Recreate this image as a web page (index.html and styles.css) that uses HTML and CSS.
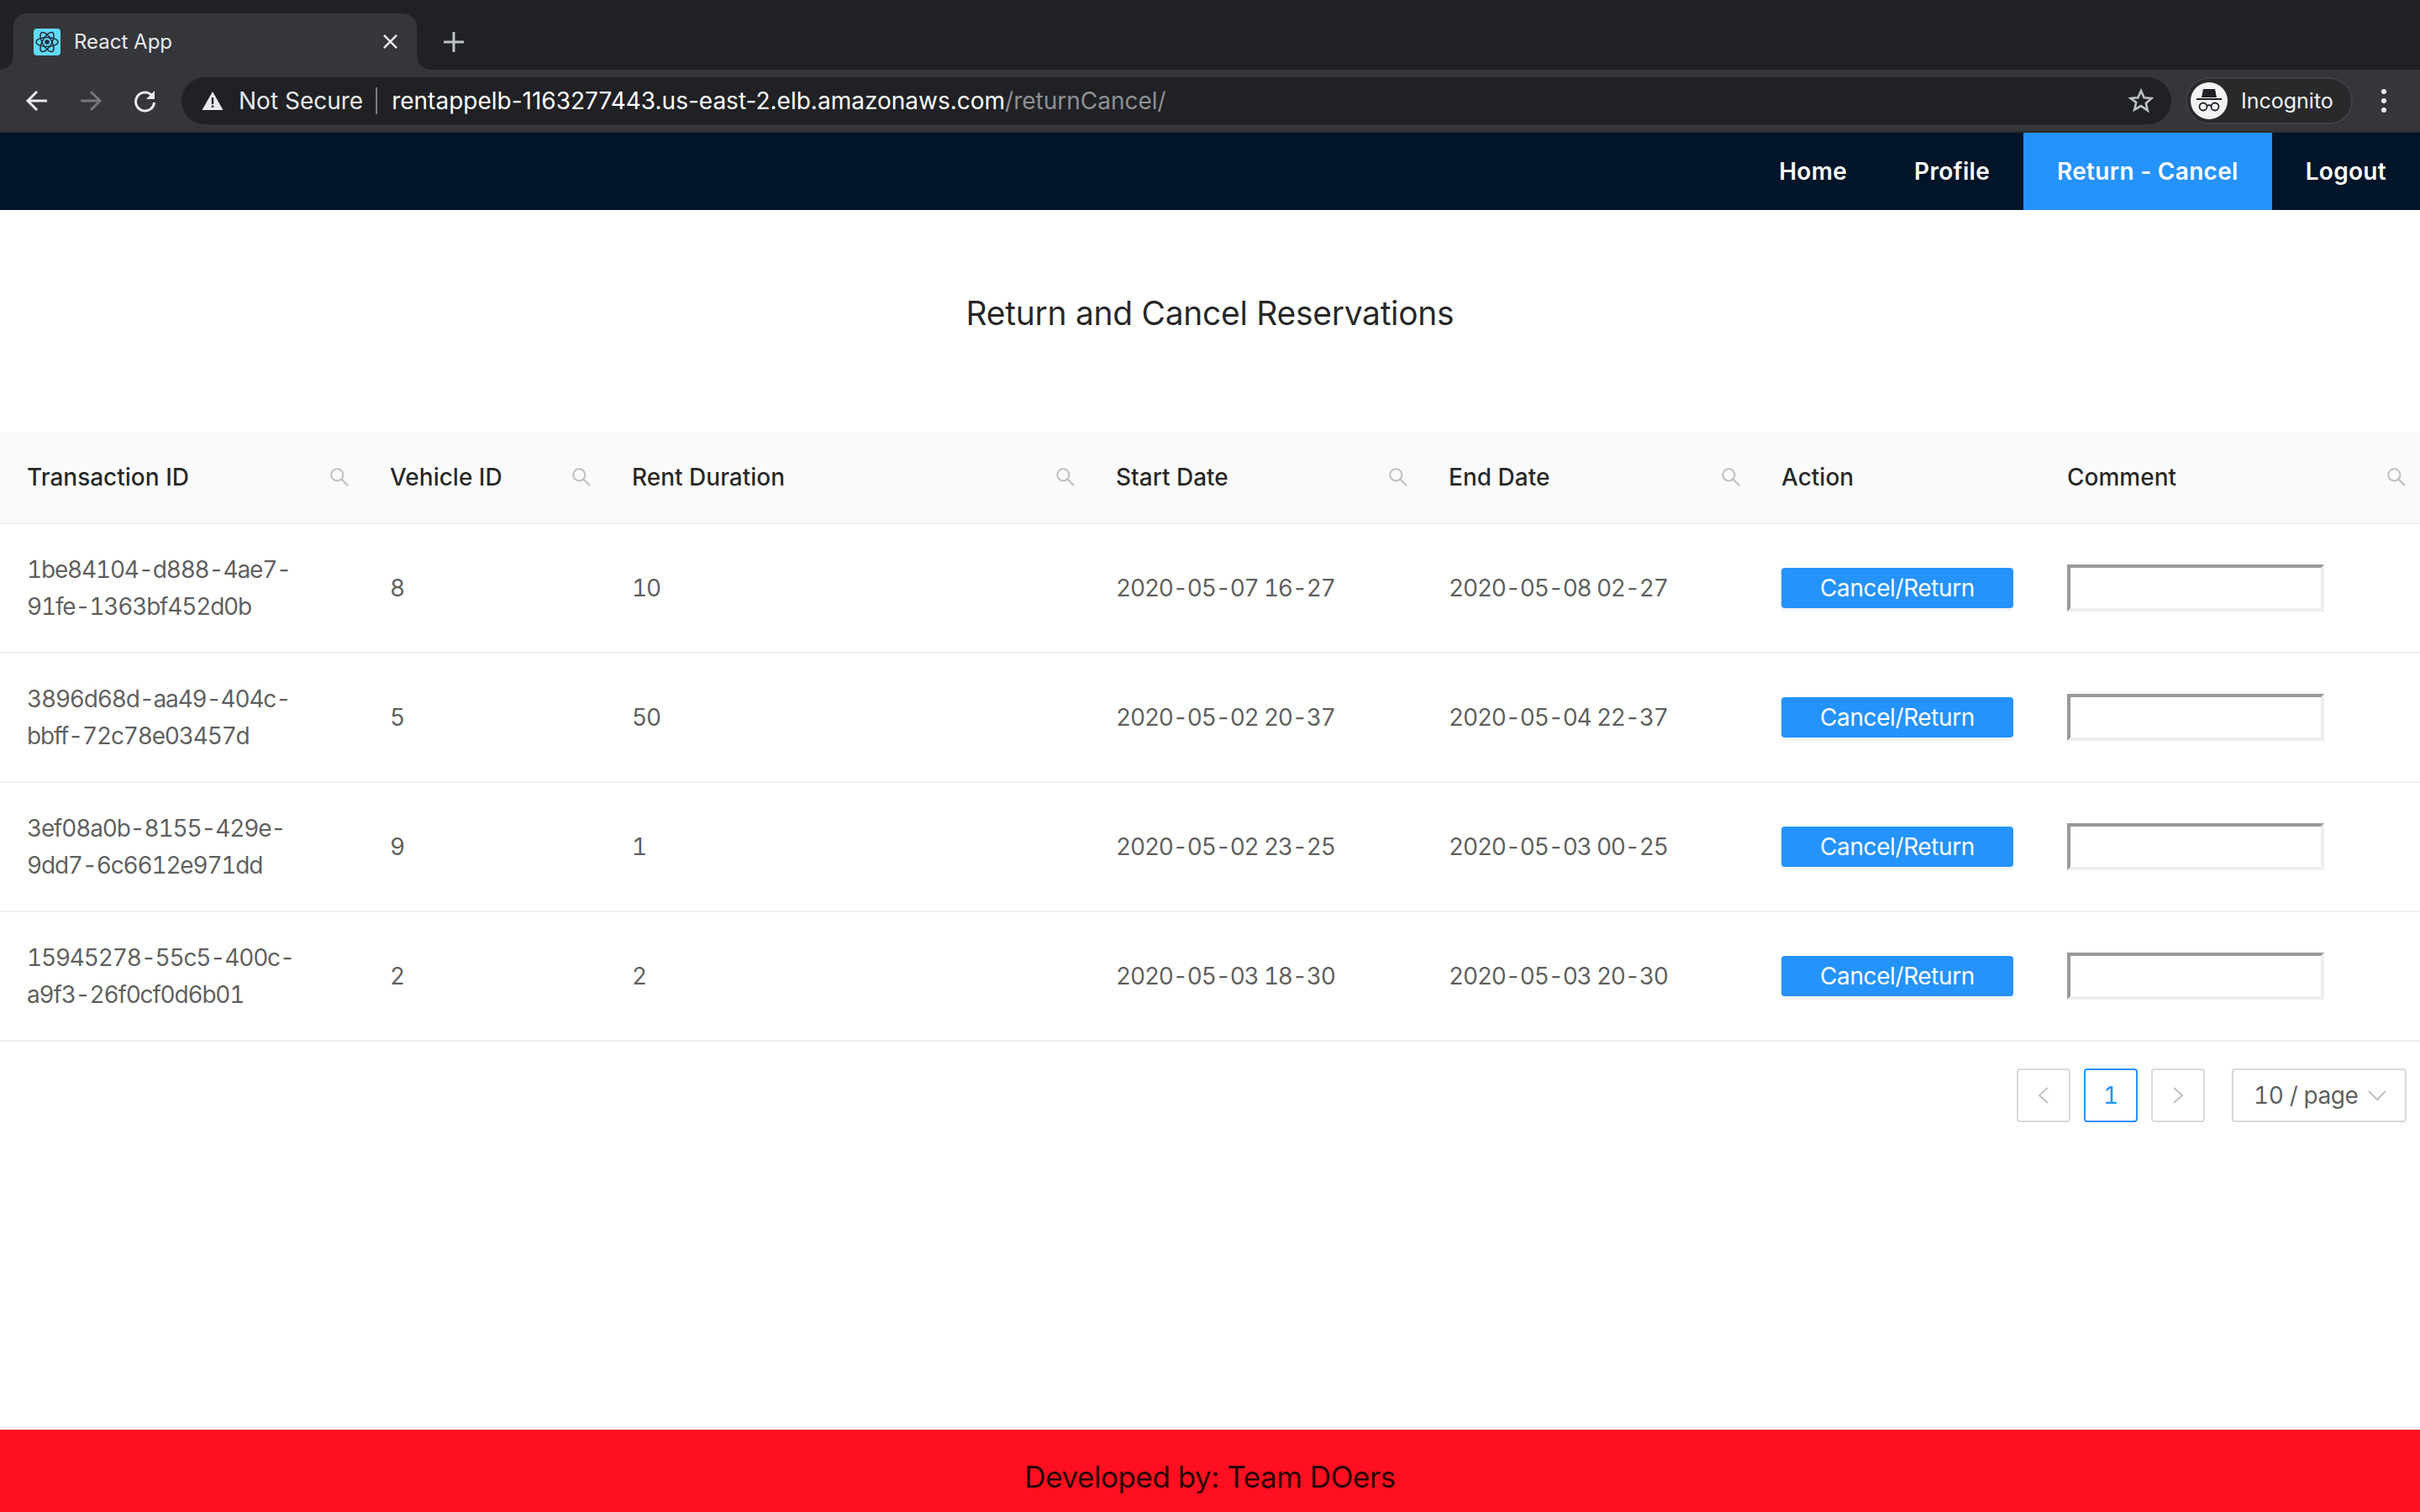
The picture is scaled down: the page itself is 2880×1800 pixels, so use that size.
FILE: index.html
```html
<!DOCTYPE html>
<html lang="en">

<head>
    <meta charset="UTF-8">
    <title>React App</title>
    <link rel="stylesheet" href="styles.css">
</head>

<body>
    <svg class="sprite">
        <symbol id="search" viewBox="64 64 896 896">
            <path d="M909.6 854.5L649.9 594.8C690.2 542.7 712 479 712 412c0-80.2-31.3-155.4-87.9-212.1-56.6-56.7-132-87.9-212.1-87.9s-155.5 31.3-212.1 87.9C143.2 256.5 112 331.8 112 412c0 80.1 31.3 155.5 87.9 212.1C256.5 680.8 331.8 712 412 712c67 0 130.6-21.8 182.7-62l259.7 259.6a8.2 8.2 0 0 0 11.6 0l43.6-43.5a8.2 8.2 0 0 0 0-11.6zM570.4 570.4C528 612.7 471.8 636 412 636s-116-23.3-158.4-65.6C211.3 528 188 471.8 188 412s23.3-116.1 65.6-158.4C296 211.3 352.2 188 412 188s116.1 23.2 158.4 65.6S636 352.2 636 412s-23.3 116.1-65.6 158.4z" />
        </symbol>
    </svg>

    <!-- browser chrome -->
    <div class="tabstrip">
        <div class="tab">
            <svg class="favicon" viewBox="0 0 32 32">
                <rect width="32" height="32" rx="4" fill="#61dafb" />
                <g fill="none" stroke="#20303a" stroke-width="1.5">
                    <ellipse cx="16" cy="16" rx="13" ry="5.500" />
                    <ellipse cx="16" cy="16" rx="13" ry="5.500" transform="rotate(60 16 16)" />
                    <ellipse cx="16" cy="16" rx="13" ry="5.500" transform="rotate(120 16 16)" />
                </g>
                <circle cx="16" cy="16" r="2.800" fill="#20303a" />
            </svg>
            <span class="tab-title">React App</span>
            <svg class="tab-close" viewBox="0 0 18 18">
                <path d="M1 1l16 16M17 1L1 17" stroke="#e8eaed" stroke-width="2.600" />
            </svg>
        </div>
        <svg class="new-tab" viewBox="0 0 24 24">
            <path d="M12 0v24M0 12h24" stroke="#bdc1c6" stroke-width="3" />
        </svg>
    </div>

    <div class="toolbar">
        <svg class="tool-icon" viewBox="0 0 28 28">
            <path d="M26 14H4M14 3L3 14l11 11" fill="none" stroke="#e8eaed" stroke-width="3" />
        </svg>
        <svg class="tool-icon" viewBox="0 0 28 28">
            <path d="M2 14h22M14 3l11 11-11 11" fill="none" stroke="#74767a" stroke-width="3" />
        </svg>
        <svg class="tool-icon" viewBox="0 0 28 28">
            <path d="M23 8a11 11 0 1 0 2.500 8" fill="none" stroke="#e8eaed" stroke-width="3" />
            <path d="M26 2v10H16z" fill="#e8eaed" />
        </svg>

        <div class="omnibox">
            <svg class="warn" viewBox="0 0 26 24">
                <path d="M13 1l12.500 22H.5z" fill="#e8eaed" />
                <path d="M11.800 8h2.400v8h-2.400zM11.800 17.500h2.400V20h-2.400z" fill="#202124" />
            </svg>
            <span class="not-secure">Not Secure</span>
            <span class="url"><span class="url-host">rentappelb-1163277443.us-east-2.elb.amazonaws.com</span>/returnCancel/</span>
            <svg class="star" viewBox="0 0 30 30">
                <path d="M15 3l3.600 8.200 8.900.8-6.700 5.900 2 8.700L15 21.100l-7.800 4.500 2-8.700L2.500 12l8.900-.8z" fill="none" stroke="#bdc1c6" stroke-width="2.600" />
            </svg>
        </div>

        <div class="profile-pill">
            <svg class="incognito" viewBox="0 0 44 44">
                <circle cx="22" cy="22" r="22" fill="#f1f3f4" />
                <path d="M15 8h14l2 10H13zM7 19h30v2H7z" fill="#202124" />
                <g fill="none" stroke="#202124" stroke-width="1.800">
                    <circle cx="15" cy="29" r="4.500" />
                    <circle cx="29" cy="29" r="4.500" />
                    <path d="M19.500 28c1.500-1 3.500-1 5 0" />
                </g>
            </svg>
            <span>Incognito</span>
        </div>

        <div class="kebab"><i></i><i></i><i></i></div>
    </div>

    <!-- app -->
    <div class="app">
        <div class="menu">
            <a class="menu-item">Home</a>
            <a class="menu-item">Profile</a>
            <a class="menu-item selected">Return - Cancel</a>
            <a class="menu-item">Logout</a>
        </div>

        <div class="content">
            <h1 class="page-title">Return and Cancel Reservations</h1>

            <table class="res-table">
                <colgroup>
                    <col class="c-id">
                    <col class="c-vehicle">
                    <col class="c-duration">
                    <col class="c-date">
                    <col class="c-date">
                    <col class="c-action">
                    <col>
                </colgroup>
                <thead>
                    <tr>
                        <th><div class="th-inner">Transaction ID<svg class="th-search"><use href="#search" /></svg></div></th>
                        <th><div class="th-inner">Vehicle ID<svg class="th-search"><use href="#search" /></svg></div></th>
                        <th><div class="th-inner">Rent Duration<svg class="th-search"><use href="#search" /></svg></div></th>
                        <th><div class="th-inner">Start Date<svg class="th-search"><use href="#search" /></svg></div></th>
                        <th><div class="th-inner">End Date<svg class="th-search"><use href="#search" /></svg></div></th>
                        <th><div class="th-inner">Action</div></th>
                        <th><div class="th-inner">Comment<svg class="th-search"><use href="#search" /></svg></div></th>
                    </tr>
                </thead>
                <tbody>
                    <tr>
                        <td>1be84104-d888-4ae7-91fe-1363bf452d0b</td>
                        <td>8</td>
                        <td>10</td>
                        <td>2020-05-07 16-27</td>
                        <td>2020-05-08 02-27</td>
                        <td><button class="action-btn">Cancel/Return</button></td>
                        <td><input class="comment-input" type="text"></td>
                    </tr>
                    <tr>
                        <td>3896d68d-aa49-404c-bbff-72c78e03457d</td>
                        <td>5</td>
                        <td>50</td>
                        <td>2020-05-02 20-37</td>
                        <td>2020-05-04 22-37</td>
                        <td><button class="action-btn">Cancel/Return</button></td>
                        <td><input class="comment-input" type="text"></td>
                    </tr>
                    <tr>
                        <td>3ef08a0b-8155-429e-9dd7-6c6612e971dd</td>
                        <td>9</td>
                        <td>1</td>
                        <td>2020-05-02 23-25</td>
                        <td>2020-05-03 00-25</td>
                        <td><button class="action-btn">Cancel/Return</button></td>
                        <td><input class="comment-input" type="text"></td>
                    </tr>
                    <tr>
                        <td>15945278-55c5-400c-a9f3-26f0cf0d6b01</td>
                        <td>2</td>
                        <td>2</td>
                        <td>2020-05-03 18-30</td>
                        <td>2020-05-03 20-30</td>
                        <td><button class="action-btn">Cancel/Return</button></td>
                        <td><input class="comment-input" type="text"></td>
                    </tr>
                </tbody>
            </table>

            <div class="pagination">
                <div class="page-box">
                    <svg class="page-arrow" viewBox="0 0 14 22"><path d="M12 2L2 11l10 9" /></svg>
                </div>
                <div class="page-box page-current">1</div>
                <div class="page-box">
                    <svg class="page-arrow" viewBox="0 0 14 22"><path d="M2 2l10 9-10 9" /></svg>
                </div>
                <div class="page-size">
                    <span>10 / page</span>
                    <svg class="size-arrow" viewBox="0 0 22 14"><path d="M1 2l10 10L21 2" /></svg>
                </div>
            </div>
        </div>

        <div class="footer">Developed by: Team DOers</div>
    </div>
</body>

</html>
```

FILE: styles.css
```css
* {
    box-sizing: border-box;
}

html,
body {
    margin: 0;
    padding: 0;
    height: 1800px;
    background-color: #fff;
    font-family: Inter, "Noto Sans", sans-serif;
    overflow: hidden;
}

body {
    display: flex;
    flex-direction: column;
}

.sprite {
    display: none;
}

/* browser chrome */
.tabstrip {
    height: 83px;
    flex: none;
    background-color: #202124;
    padding: 16px 0 0 16px;
    display: flex;
    align-items: flex-start;
}

.tab {
    position: relative;
    width: 480px;
    height: 67px;
    background-color: #35363a;
    border-radius: 16px 16px 0 0;
    display: flex;
    align-items: center;
    padding: 0 23px 0 24px;
    color: #e8eaed;
}

.tab::before,
.tab::after {
    content: "";
    position: absolute;
    bottom: 0;
    width: 16px;
    height: 16px;
    background: radial-gradient(circle at 0 0, #202124 15.500px, #35363a 16px);
}

.tab::before {
    left: -16px;
}

.tab::after {
    right: -16px;
    background: radial-gradient(circle at 100% 0, #202124 15.500px, #35363a 16px);
}

.favicon {
    width: 32px;
    height: 32px;
    flex: none;
}

.tab-title {
    margin-left: 16px;
    font-size: 24px;
    flex: 1;
}

.tab-close {
    width: 17px;
    height: 17px;
}

.new-tab {
    width: 24px;
    height: 24px;
    margin: 22px 0 0 32px;
}

.toolbar {
    height: 75px;
    flex: none;
    background-color: #35363a;
    border-bottom: 2px solid #2b2c2f;
    padding: 9px 0 8px 30px;
    display: flex;
    align-items: center;
}

.tool-icon {
    width: 28px;
    height: 28px;
    margin-right: 36px;
    flex: none;
}

.omnibox {
    width: 2368px;
    height: 56px;
    margin-left: -6px;
    background-color: #202124;
    border-radius: 28px;
    display: flex;
    align-items: center;
    padding: 0 21px 0 24px;
    font-size: 28px;
    color: #e8eaed;
}

.warn {
    width: 26px;
    height: 24px;
    flex: none;
}

.not-secure {
    margin-left: 18px;
    padding-right: 15px;
    border-right: 2px solid #7b7d80;
    line-height: 32px;
}

.url {
    margin-left: 17px;
    flex: 1;
    color: #8e9093;
}

.url-host {
    color: #fff;
}

.star {
    width: 30px;
    height: 30px;
}

.profile-pill {
    width: 199px;
    height: 56px;
    margin-left: 17px;
    border: 2px solid #3f4044;
    background-color: #29292c;
    border-radius: 28px;
    display: flex;
    align-items: center;
    padding-left: 4px;
    gap: 16px;
    font-size: 25px;
    color: #f1f3f4;
    flex: none;
}

.incognito {
    width: 44px;
    height: 44px;
    flex: none;
}

.kebab {
    margin-left: 34px;
    display: flex;
    flex-direction: column;
    gap: 5px;
}

.kebab i {
    display: block;
    width: 6px;
    height: 6px;
    border-radius: 50%;
    background-color: #e8eaed;
}

/* app */
.app {
    flex: 1;
    display: flex;
    flex-direction: column;
}

.menu {
    height: 92px;
    flex: none;
    background-color: #001529;
    display: flex;
    justify-content: flex-end;
}

.menu-item {
    padding: 0 40px;
    line-height: 92px;
    font-size: 28px;
    font-weight: 600;
    letter-spacing: 0.3px;
    color: #fff;
}

.menu-item.selected {
    background-color: #2593fc;
}

.content {
    flex: 1;
}

.page-title {
    height: 264px;
    margin: 0;
    padding-bottom: 19px;
    display: flex;
    align-items: center;
    justify-content: center;
    font-size: 39px;
    font-weight: 400;
    letter-spacing: -0.3px;
    color: rgba(0, 0, 0, 0.85);
}

.res-table {
    width: 100%;
    table-layout: fixed;
    border-collapse: separate;
    border-spacing: 0;
    font-size: 28px;
    color: rgba(0, 0, 0, 0.65);
    font-variant-numeric: tabular-nums;
}

.c-id {
    width: 432px;
}

.c-vehicle {
    width: 288px;
}

.c-duration {
    width: 576px;
}

.c-date {
    width: 396px;
}

.c-action {
    width: 340px;
}

.res-table th {
    height: 110px;
    padding: 0 16px 0 32px;
    background-color: #fafafa;
    border-bottom: 2px solid #f0f0f0;
    text-align: left;
    font-weight: 500;
    color: rgba(0, 0, 0, 0.85);
}

.th-inner {
    display: flex;
    align-items: center;
    justify-content: space-between;
}

.th-search {
    width: 24px;
    height: 24px;
    fill: #bfbfbf;
}

.res-table td {
    height: 154px;
    padding: 0 32px;
    border-bottom: 2px solid #f0f0f0;
    line-height: 44px;
    letter-spacing: -1.2px;
}

.action-btn {
    display: block;
    width: 276px;
    height: 48px;
    padding: 0;
    border: 0;
    border-radius: 4px;
    background-color: #2593fc;
    box-shadow: 0 4px 0 rgba(0, 0, 0, 0.045);
    font-family: inherit;
    font-size: 28px;
    letter-spacing: -0.4px;
    color: #fff;
}

.comment-input {
    display: block;
    width: 306px;
    height: 56px;
    border: 4px solid;
    border-color: #999 #eee #eee #999;
    background-color: #fff;
}

.pagination {
    display: flex;
    justify-content: flex-end;
    padding: 32px 16px 0 0;
    font-variant-numeric: tabular-nums;
}

.page-box {
    width: 64px;
    height: 64px;
    margin-right: 16px;
    border: 2px solid #d9d9d9;
    border-radius: 4px;
    display: flex;
    align-items: center;
    justify-content: center;
    font-size: 28px;
}

.page-current {
    border-color: #2593fc;
    color: #2593fc;
}

.page-arrow {
    width: 14px;
    height: 22px;
    fill: none;
    stroke: #bfbfbf;
    stroke-width: 2;
}

.page-size {
    width: 208px;
    height: 64px;
    margin-left: 16px;
    border: 2px solid #d9d9d9;
    border-radius: 4px;
    display: flex;
    align-items: center;
    justify-content: space-between;
    padding: 0 22px 0 24px;
    font-size: 28px;
    letter-spacing: -0.4px;
    color: rgba(0, 0, 0, 0.65);
}

.size-arrow {
    width: 22px;
    height: 14px;
    fill: none;
    stroke: #bfbfbf;
    stroke-width: 2;
}

.footer {
    height: 98px;
    flex: none;
    padding-top: 14px;
    background-color: #ff0f1f;
    display: flex;
    align-items: center;
    justify-content: center;
    font-size: 35px;
    letter-spacing: -0.45px;
    color: rgba(0, 0, 0, 0.85);
}
```
